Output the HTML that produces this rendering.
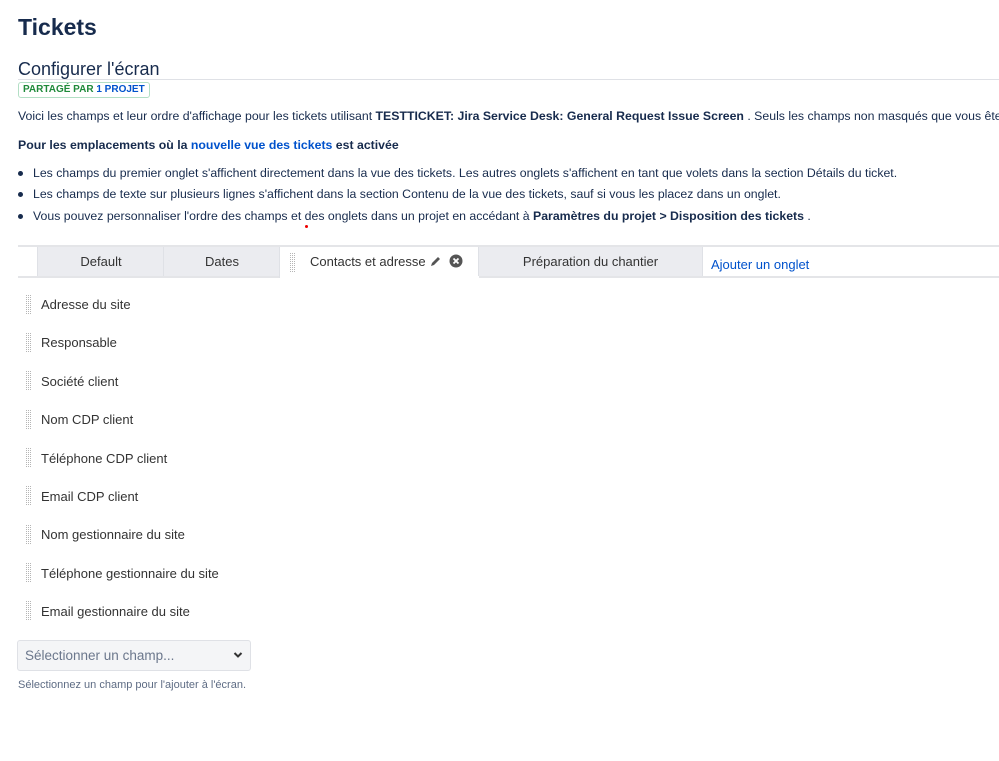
<!DOCTYPE html>
<html><head><meta charset="utf-8"><style>
body{margin:0;width:999px;height:761px;overflow:hidden;background:#fff;font-family:"Liberation Sans",sans-serif;color:#172b4d;font-size:13px;position:relative}
.a{position:absolute;white-space:nowrap}
h1{position:absolute;left:18px;top:14px;margin:0;font-size:23px;font-weight:bold;color:#172b4d}
.h2{left:18px;top:59px;font-size:18px}
.line{position:absolute;left:18px;right:0;height:1px;background:#dfe1e6}
.badge{left:18px;top:82px;border:1px solid #b3dfc5;border-radius:3px;font-size:10px;font-weight:bold;color:#1f8a3a;padding:1px 4px;line-height:12px}
.badge span{color:#0052cc}
.p{left:18px;font-size:12.3px}
b{color:#172b4d}
.li{left:33px;font-size:12.3px}
.dot{position:absolute;left:18px;width:5px;height:5px;border-radius:50%;background:#172b4d}
.tab{position:absolute;top:247px;height:29px;background:#ebecf0;border-left:1px solid #dfe1e6;text-align:center;line-height:30px;font-size:13px;color:#333}
.f{left:41px;font-size:13px;color:#333}
a{color:#0052cc;text-decoration:none}
svg.g{position:absolute}
</style></head><body>
<svg width="0" height="0" style="position:absolute"><defs><pattern id="pt" width="2" height="2" patternUnits="userSpaceOnUse"><rect width="1" height="1" fill="#b5b5b5"/></pattern></defs></svg>
<h1>Tickets</h1>
<div class="a h2">Configurer l'écran</div>
<div class="line" style="top:79px"></div>
<div class="a badge">PARTAGÉ PAR <span>1 PROJET</span></div>
<div class="a p" style="top:109px;right:0;overflow:hidden">Voici les champs et leur ordre d'affichage pour les tickets utilisant <b>TESTTICKET: Jira Service Desk: General Request Issue Screen</b> . Seuls les champs non masqués que vous êtes autorisé</div>
<div class="a p" style="top:138px"><b>Pour les emplacements où la <a href="#">nouvelle vue des tickets</a> est activée</b></div>
<div class="dot" style="top:171px"></div><div class="a li" style="top:166px">Les champs du premier onglet s'affichent directement dans la vue des tickets. Les autres onglets s'affichent en tant que volets dans la section Détails du ticket.</div>
<div class="dot" style="top:192px"></div><div class="a li" style="top:187px">Les champs de texte sur plusieurs lignes s'affichent dans la section Contenu de la vue des tickets, sauf si vous les placez dans un onglet.</div>
<div class="dot" style="top:214px"></div><div class="a li" style="top:209px">Vous pouvez personnaliser l'ordre des champs et des onglets dans un projet en accédant à <b>Paramètres du projet &gt; Disposition des tickets</b> .</div>
<div style="position:absolute;left:305px;top:225px;width:3px;height:3px;border-radius:50%;background:#e00"></div>
<div class="line" style="top:245px;height:2px;background:#e4e5e8"></div>
<div class="line" style="top:276px;height:2px;background:#e4e5e8"></div>
<div class="tab" style="left:37px;width:126px">Default</div>
<div class="tab" style="left:163px;width:116px">Dates</div>
<div class="tab" style="left:279px;width:199px;background:#fff;height:31px;text-align:left"><span style="position:absolute;left:30px">Contacts et adresse</span></div>
<svg class="g" style="left:290px;top:253px" width="6" height="19"><rect width="6" height="19" fill="url(#pt)"/></svg>
<svg class="a" style="left:429px;top:255px" width="13" height="13" viewBox="0 0 13 13"><path d="M2 11l1-3 6-6 2 2-6 6z" fill="#555"/></svg>
<svg class="a" style="left:449px;top:254px" width="14" height="14" viewBox="0 0 14 14"><circle cx="7" cy="7" r="6.5" fill="#555"/><path d="M4.5 4.5l5 5M9.5 4.5l-5 5" stroke="#fff" stroke-width="1.8"/></svg>
<div class="tab" style="left:478px;width:223px;border-right:1px solid #dfe1e6">Préparation du chantier</div>
<div class="a" style="left:711px;top:257px;font-size:13px"><a href="#">Ajouter un onglet</a></div>
<svg class="g" style="left:26px;top:295px" width="6" height="19"><rect width="6" height="19" fill="url(#pt)"/></svg><div class="a f" style="top:297px">Adresse du site</div>
<svg class="g" style="left:26px;top:333px" width="6" height="19"><rect width="6" height="19" fill="url(#pt)"/></svg><div class="a f" style="top:335px">Responsable</div>
<svg class="g" style="left:26px;top:371px" width="6" height="19"><rect width="6" height="19" fill="url(#pt)"/></svg><div class="a f" style="top:374px">Société client</div>
<svg class="g" style="left:26px;top:410px" width="6" height="19"><rect width="6" height="19" fill="url(#pt)"/></svg><div class="a f" style="top:412px">Nom CDP client</div>
<svg class="g" style="left:26px;top:448px" width="6" height="19"><rect width="6" height="19" fill="url(#pt)"/></svg><div class="a f" style="top:451px">Téléphone CDP client</div>
<svg class="g" style="left:26px;top:486px" width="6" height="19"><rect width="6" height="19" fill="url(#pt)"/></svg><div class="a f" style="top:489px">Email CDP client</div>
<svg class="g" style="left:26px;top:525px" width="6" height="19"><rect width="6" height="19" fill="url(#pt)"/></svg><div class="a f" style="top:527px">Nom gestionnaire du site</div>
<svg class="g" style="left:26px;top:563px" width="6" height="19"><rect width="6" height="19" fill="url(#pt)"/></svg><div class="a f" style="top:566px">Téléphone gestionnaire du site</div>
<svg class="g" style="left:26px;top:601px" width="6" height="19"><rect width="6" height="19" fill="url(#pt)"/></svg><div class="a f" style="top:604px">Email gestionnaire du site</div>
<div style="position:absolute;left:17px;top:640px;width:232px;height:29px;background:#f4f5f7;border:1px solid #dfe1e6;border-radius:3px"></div>
<div class="a" style="left:25px;top:648px;font-size:13.5px;color:#6b778c">Sélectionner un champ...</div>
<svg class="a" style="left:233px;top:651px" width="10" height="8" viewBox="0 0 10 8"><path d="M1.5 2l3.5 3.5L8.5 2" stroke="#333" stroke-width="2" fill="none"/></svg>
<div class="a" style="left:18px;top:679px;font-size:11px;color:#5e6c84">Sélectionnez un champ pour l'ajouter à l'écran.</div>
</body></html>
